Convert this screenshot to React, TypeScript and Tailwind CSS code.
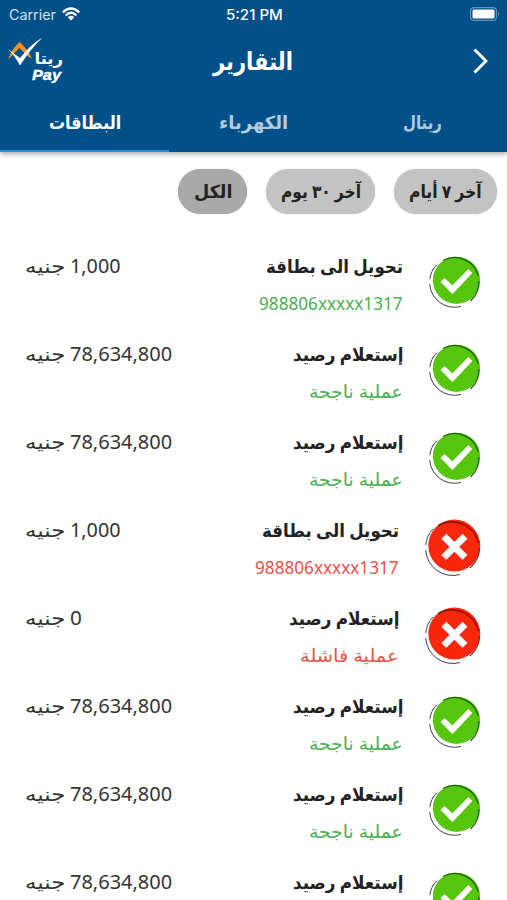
import { useLayoutEffect, useRef } from "react";

type FitProps = { children: string; width: number; className?: string };

/* Single-line label stretched horizontally so that it fills a given width. */
function Fit({ children, width, className = "" }: FitProps) {
  const ref = useRef<HTMLSpanElement>(null);
  useLayoutEffect(() => {
    const el = ref.current;
    if (el && el.offsetWidth) {
      el.style.transform = `scaleX(${width / el.offsetWidth})`;
    }
  }, [width, children]);
  return (
    <span className="inline-flex shrink-0 justify-start" dir="ltr" style={{ width }}>
      <span ref={ref} className={`inline-block shrink-0 origin-left whitespace-nowrap ${className}`}>
        <bdi>{children}</bdi>
      </span>
    </span>
  );
}

function SuccessIcon() {
  return (
    <svg width="52" height="54" viewBox="429 255 52 54" fill="none">
      <circle cx="456.5" cy="280.3" r="23.6" fill="#55c60b" />
      <path d="M437 264.500A25 25 0 0 0 429.800 279M429.700 284A25 25 0 0 0 461 306.500" stroke="#444" strokeWidth="1" />
      <path d="M443 260.500A24.500 24.500 0 0 1 478.300 276" stroke="#17620b" strokeWidth="1.300" />
      <path d="M478.800 281A25 25 0 0 1 470.500 301" stroke="#264d20" strokeWidth="1.100" />
      <path d="M440.500 282L444.700 278L452.300 285.500L468.300 269L472.500 273L452.500 294Z" fill="#fff" />
    </svg>
  );
}

function FailIcon() {
  return (
    <svg width="56" height="58" viewBox="425 519 56 58" fill="none">
      <circle cx="454.300" cy="545.600" r="26" fill="#fb270c" />
      <path d="M433 529A27 27 0 0 0 425.700 545M425.700 550A27 27 0 0 0 460 574.500" stroke="#444" strokeWidth="1" />
      <path d="M438 525.800C452 517.500 474 523 478.300 543" stroke="#8d1608" strokeWidth="1.600" />
      <path d="M479.500 548A27 27 0 0 1 470 568" stroke="#61302a" strokeWidth="1.100" />
      <path d="M443.800 536.200L465 557.400M465 536.200L443.800 557.400" stroke="#fff" strokeWidth="7" />
    </svg>
  );
}

type Entry = {
  title: string;
  titleWidth: number;
  note: string;
  noteWidth: number;
  amount: string;
  amountWidth: number;
  ok: boolean;
};

const transfer = { title: "تحويل الى بطاقة", titleWidth: 137, note: "988806xxxxx1317", noteWidth: 144, amount: "1,000", amountWidth: 51 };
const inquiry = { title: "إستعلام رصيد", titleWidth: 110, note: "عملية ناجحة", noteWidth: 94, amount: "78,634,800", amountWidth: 102, ok: true };

const entries: Entry[] = [
  { ...transfer, ok: true },
  inquiry,
  inquiry,
  { ...transfer, ok: false },
  { ...inquiry, note: "عملية فاشلة", noteWidth: 99, amount: "0", amountWidth: 12, ok: false },
  inquiry,
  inquiry,
  inquiry,
];

function Row({ entry }: { entry: Entry }) {
  return (
    <div className="flex h-[88px] shrink-0 items-start pt-[10px] pr-[26px] pl-[25px]">
      <div className="flex h-9 items-center gap-[5px] text-[#333]">
        <Fit width={40} className="text-[19px]">جنيه</Fit>
        <Fit width={entry.amountWidth} className="text-[19px]">{entry.amount}</Fit>
      </div>
      <div className="flex flex-1 flex-col items-end gap-px">
        <div className="flex h-9 items-center text-[#222]">
          <Fit width={entry.titleWidth} className="text-[18px] font-bold">{entry.title}</Fit>
        </div>
        <div className={`flex h-9 items-center ${entry.ok ? "text-[#4caf50]" : "text-[#ed5248]"}`}>
          <Fit width={entry.noteWidth} className="text-[18px]">{entry.note}</Fit>
        </div>
      </div>
      <div className="ml-[26px] pt-[7px]">
        {entry.ok ? <SuccessIcon /> : <FailIcon />}
      </div>
    </div>
  );
}

function Logo() {
  return (
    <svg width="60" height="50" viewBox="6 35 60 50">
      <path d="M8.200 58.500C10 52 14 46 19.500 41C25 46 29 51 32 58L28 55.500L19.500 47L12.500 54Z" fill="#f6921e" />
      <path d="M8 48L20 57C26 49.500 33 42 42.500 36.500C34 44.500 27 54 20 64.500C17 59 13 53 8 48Z" fill="#fff" />
      <text x="34.5" y="62.500" textLength="28.500" lengthAdjust="spacingAndGlyphs" fill="#fff" fontFamily="DejaVu Sans" fontWeight="bold" fontSize="16">ريتا</text>
      <text x="32" y="79" textLength="29" lengthAdjust="spacingAndGlyphs" fill="#fff" stroke="#fff" strokeWidth=".4" fontFamily="Liberation Sans" fontWeight="bold" fontStyle="italic" fontSize="15">Pay</text>
    </svg>
  );
}

export default function App() {
  return (
    <div className="flex h-[900px] w-[507px] flex-col overflow-hidden bg-white font-['Noto_Sans','DejaVu_Sans',sans-serif]">
      <header className="relative z-10 flex h-[152px] shrink-0 flex-col bg-[#01508a] text-white shadow-[0_2px_5px_rgba(0,0,0,0.35)]">
        <div className="grid h-[28px] grid-cols-3 items-center pr-[7px] pl-[9px] font-['Inter',sans-serif]">
          <div className="flex items-center gap-[6px]">
            <Fit width={47} className="text-[14px] text-[#d5e2ec]">Carrier</Fit>
            <svg width="18" height="14" viewBox="0 0 18 14" fill="none" stroke="#fff" strokeWidth="2.300">
              <path d="M.8 5.300Q9-2.300 17.200 5.300M3.700 8.300Q9 3.300 14.300 8.300" />
              <path d="M5.800 10.200Q9 7.500 12.200 10.200L9 13.500Z" fill="#fff" stroke="none" />
            </svg>
          </div>
          <div className="flex justify-center">
            <Fit width={57} className="text-[14px] font-medium">5:21 PM</Fit>
          </div>
          <div className="flex justify-end">
            <svg width="30" height="14" viewBox="0 0 30 14">
              <rect x=".6" y=".6" width="25.800" height="12.800" rx="3.500" fill="none" stroke="#6793b7" strokeWidth="1.200" />
              <rect x="2.500" y="2.500" width="22" height="9" rx="1.500" fill="#fff" />
              <path d="M28 4.500Q30 7 28 9.500Z" fill="#6793b7" />
            </svg>
          </div>
        </div>
        <div className="grid h-[66px] grid-cols-3 items-center pr-[19px] pl-[6px]">
          <div className="flex"><Logo /></div>
          <div className="flex justify-center pl-[13px]">
            <Fit width={80} className="text-[25px] font-bold">التقارير</Fit>
          </div>
          <div className="flex justify-end">
            <svg width="15" height="26" viewBox="0 0 15 26" fill="none" stroke="#fff" strokeWidth="3">
              <path d="M1.500 1.500L13 13L1.500 24.500" />
            </svg>
          </div>
        </div>
        <nav className="grid h-[58px] grid-cols-3 text-[18px] font-bold">
          <div className="flex items-center justify-center border-b-2 border-[#2688e0]">
            <Fit width={72}>البطاقات</Fit>
          </div>
          <div className="flex items-center justify-center border-b-2 border-transparent text-[#b3cbdc]">
            <Fit width={69}>الكهرباء</Fit>
          </div>
          <div className="flex items-center justify-center border-b-2 border-transparent text-[#b3cbdc]">
            <Fit width={39}>ريتال</Fit>
          </div>
        </nav>
      </header>
      <div className="flex h-[86px] shrink-0 items-start justify-end gap-[19px] pt-[17px] pr-[10px] text-[18px] font-bold text-[#222]">
        <button className="flex h-[45px] w-[69px] items-center justify-center rounded-full bg-[#a9a9a9] shadow-[0_0_1px_#999]">
          <Fit width={38}>الكل</Fit>
        </button>
        <button className="flex h-[45px] w-[109px] items-center justify-center rounded-full bg-[#c3c3c3] shadow-[0_0_1px_#aaa]">
          <Fit width={80}>آخر ٣٠ يوم</Fit>
        </button>
        <button className="flex h-[45px] w-[103px] items-center justify-center rounded-full bg-[#c3c3c3] shadow-[0_0_1px_#aaa]">
          <Fit width={73}>آخر ٧ أيام</Fit>
        </button>
      </div>
      <main className="flex flex-col">
        {entries.map((entry, i) => (
          <Row key={i} entry={entry} />
        ))}
      </main>
    </div>
  );
}
